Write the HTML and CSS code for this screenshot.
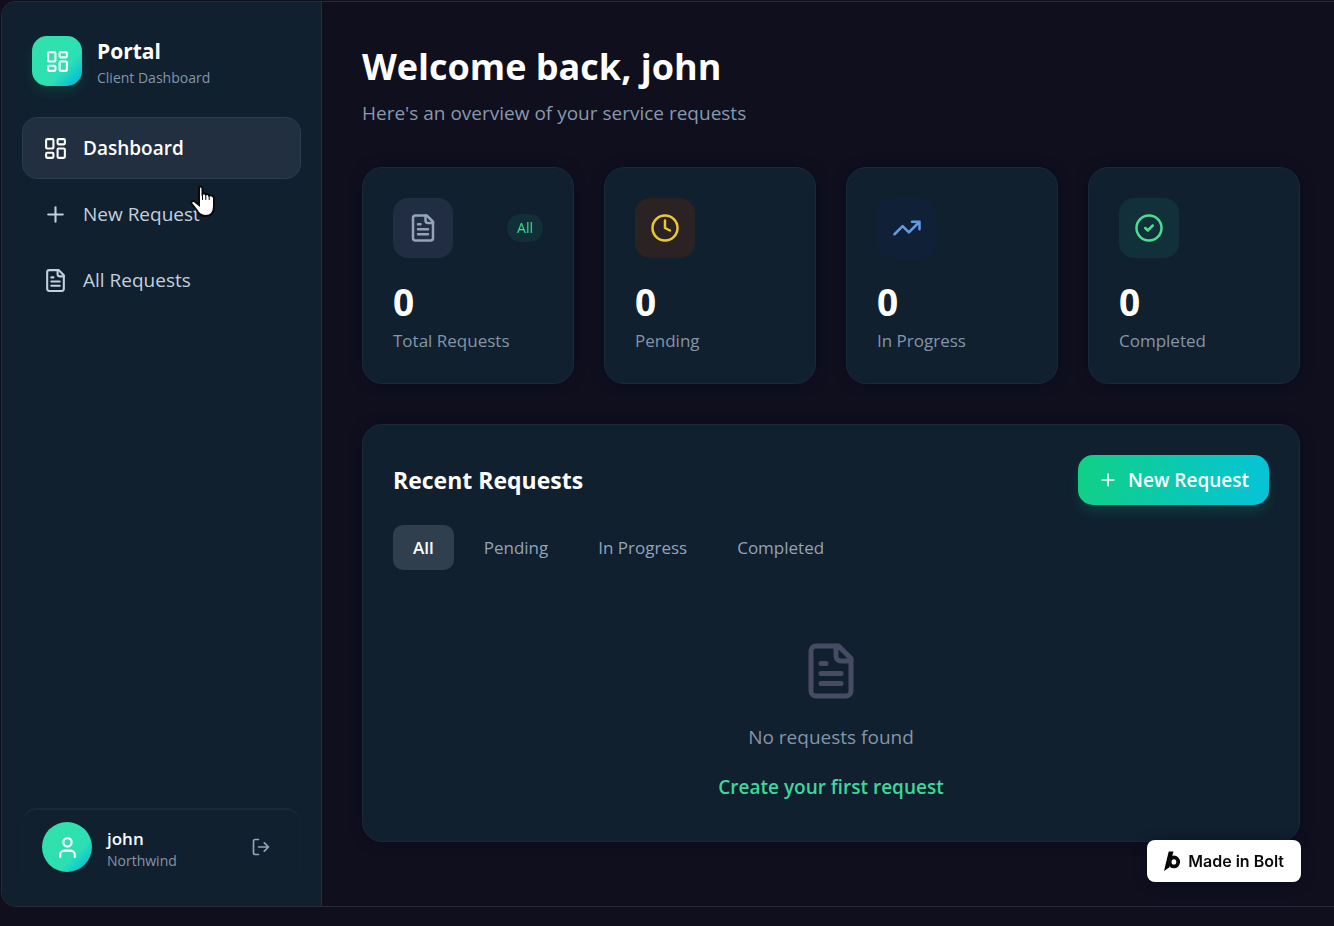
FILE: index.html
```html
<!DOCTYPE html>
<html lang="en">
<head>
    <meta charset="UTF-8">
    <meta name="viewport" content="width=device-width, initial-scale=1.0">
    <title>Portal - Client Dashboard</title>
    <link rel="stylesheet" href="styles.css">
</head>
<body>
    <!-- shared icons -->
    <svg class="sprite" aria-hidden="true">
        <symbol id="icon-dashboard" viewBox="0 0 24 24">
            <rect x="3" y="3" width="7" height="9" rx="1"/>
            <rect x="14" y="3" width="7" height="5" rx="1"/>
            <rect x="14" y="12" width="7" height="9" rx="1"/>
            <rect x="3" y="16" width="7" height="5" rx="1"/>
        </symbol>
        <symbol id="icon-plus" viewBox="0 0 24 24">
            <path d="M5 12h14M12 5v14"/>
        </symbol>
        <symbol id="icon-file" viewBox="0 0 24 24">
            <path d="M15 2H6a2 2 0 0 0-2 2v16a2 2 0 0 0 2 2h12a2 2 0 0 0 2-2V7Z"/>
            <path d="M14 2v4a2 2 0 0 0 2 2h4M10 9H8M16 13H8M16 17H8"/>
        </symbol>
    </svg>

    <div class="app">
        <aside class="sidebar">
            <div class="brand">
                <div class="brand-logo">
                    <svg class="icon"><use href="#icon-dashboard"/></svg>
                </div>
                <div class="brand-text">
                    <div class="brand-name">Portal</div>
                    <div class="brand-sub">Client Dashboard</div>
                </div>
            </div>

            <nav class="nav">
                <a href="#" class="nav-item active">
                    <svg class="icon"><use href="#icon-dashboard"/></svg>
                    Dashboard
                </a>
                <a href="#new" class="nav-item">
                    <svg class="icon"><use href="#icon-plus"/></svg>
                    New Request
                </a>
                <a href="#all" class="nav-item">
                    <svg class="icon"><use href="#icon-file"/></svg>
                    All Requests
                </a>
            </nav>

            <div class="user">
                <div class="avatar">
                    <svg class="icon" viewBox="0 0 24 24"><circle cx="12" cy="7" r="4"/><path d="M19 21v-2a4 4 0 0 0-4-4H9a4 4 0 0 0-4 4v2"/></svg>
                </div>
                <div class="user-info">
                    <div class="user-name">john</div>
                    <div class="user-company">Northwind</div>
                </div>
                <button type="button" class="logout" aria-label="Sign out">
                    <svg class="icon" viewBox="0 0 24 24"><path d="M9 21H5a2 2 0 0 1-2-2V5a2 2 0 0 1 2-2h4M16 17l5-5-5-5M21 12H9"/></svg>
                </button>
            </div>
        </aside>

        <main class="main">
            <h1>Welcome back, john</h1>
            <p class="subtitle">Here's an overview of your service requests</p>

            <div class="stats">
                <div class="card stat">
                    <div class="stat-top">
                        <div class="stat-icon total"><svg class="icon"><use href="#icon-file"/></svg></div>
                        <span class="badge">All</span>
                    </div>
                    <div class="stat-value">0</div>
                    <div class="stat-label">Total Requests</div>
                </div>
                <div class="card stat">
                    <div class="stat-top">
                        <div class="stat-icon pending"><svg class="icon" viewBox="0 0 24 24"><circle cx="12" cy="12" r="10"/><path d="M12 6v6l4 2"/></svg></div>
                    </div>
                    <div class="stat-value">0</div>
                    <div class="stat-label">Pending</div>
                </div>
                <div class="card stat">
                    <div class="stat-top">
                        <div class="stat-icon progress"><svg class="icon" viewBox="0 0 24 24"><path d="M22 7l-8.500 8.500-5-5L2 17M16 7h6v6"/></svg></div>
                    </div>
                    <div class="stat-value">0</div>
                    <div class="stat-label">In Progress</div>
                </div>
                <div class="card stat">
                    <div class="stat-top">
                        <div class="stat-icon completed"><svg class="icon" viewBox="0 0 24 24"><circle cx="12" cy="12" r="10"/><path d="M9 12l2 2 4-4"/></svg></div>
                    </div>
                    <div class="stat-value">0</div>
                    <div class="stat-label">Completed</div>
                </div>
            </div>

            <section class="card requests">
                <div class="requests-header">
                    <h2>Recent Requests</h2>
                    <button type="button" class="new-btn">
                        <svg class="icon"><use href="#icon-plus"/></svg>
                        New Request
                    </button>
                </div>
                <div class="tabs">
                    <button type="button" class="tab active">All</button>
                    <button type="button" class="tab">Pending</button>
                    <button type="button" class="tab">In Progress</button>
                    <button type="button" class="tab">Completed</button>
                </div>
                <div class="empty">
                    <svg class="icon"><use href="#icon-file"/></svg>
                    <p>No requests found</p>
                    <a href="#new">Create your first request</a>
                </div>
            </section>
        </main>
    </div>

    <a href="#bolt" class="bolt-badge">
        <svg viewBox="0 0 18 22"><path d="M5 1h5L5.500 18 0 21.500Z"/><ellipse cx="10.500" cy="12" rx="4.500" ry="4.800"/></svg>
        Made in Bolt
    </a>

    <svg class="pointer" viewBox="0 0 26 34" aria-hidden="true">
        <path d="M9 3.500Q9 1.500 10.500 1.500T12.500 3.500V9Q14.500 7.500 15.700 9.500Q18 8.300 19 10.500Q22.500 9.500 24 12.500V21Q24 31 15.500 31Q9.500 31 6.500 25L1.500 18.500Q1 15.500 4 16L9 20Z"/>
        <path class="pointer-lines" d="M12.500 9v6M15.800 10V15M19.200 11V15"/>
    </svg>
</body>
</html>
```

FILE: styles.css
```css
* {
    box-sizing: border-box;
}

body {
    margin: 0;
    padding: 1px 0 19px 1px;
    min-height: 100vh;
    display: flex;
    background-color: #100f1e;
    color: white;
    font-family: "Segoe UI", "Open Sans", "Noto Sans", sans-serif;
    font-size: 19px;
    line-height: 28px;
}

h1, h2, p {
    margin: 0;
}

a {
    text-decoration: none;
}

button {
    border: none;
    background: none;
    padding: 0;
    color: inherit;
    font: inherit;
    cursor: pointer;
}

.sprite {
    position: absolute;
    width: 0;
    height: 0;
}

.icon {
    width: 25px;
    height: 25px;
    flex-shrink: 0;
    fill: none;
    stroke: currentColor;
    stroke-width: 2;
    stroke-linecap: round;
    stroke-linejoin: round;
}

.app {
    flex: 1;
    display: flex;
    border: 1px solid #2b2a3b;
    border-right: none;
    border-radius: 15px 0 0 15px;
    overflow: hidden;
}

/* sidebar */
.sidebar {
    width: 320px;
    flex-shrink: 0;
    display: flex;
    flex-direction: column;
    padding: 30px 20px 22px;
    background-color: #10202f;
    border-right: 1px solid #1d3141;
}

.brand {
    display: flex;
    align-items: center;
    gap: 15px;
    padding: 0 10px;
    margin-bottom: 27px;
}

.brand-text {
    padding-top: 4px;
}

.brand-logo,
.avatar {
    width: 50px;
    height: 50px;
    display: flex;
    align-items: center;
    justify-content: center;
    background: linear-gradient(135deg, #34e0a8 0%, #2ce0b4 65%, #06bfd6 90%);
}

.brand-logo {
    border-radius: 15px;
    box-shadow: 0 6px 12px rgba(16, 185, 129, 0.15);
}

.brand-name {
    font-size: 21px;
    line-height: 30px;
    font-weight: 700;
}

.brand-sub,
.user-company {
    font-size: 14px;
    line-height: 24px;
    color: #8595a7;
}

.nav {
    display: flex;
    flex-direction: column;
    gap: 4px;
}

.nav-item {
    height: 62px;
    display: flex;
    align-items: center;
    gap: 15px;
    padding: 0 20px;
    border: 1px solid transparent;
    border-radius: 15px;
    color: #c3cfdd;
}

.nav-item.active {
    background-color: #212f40;
    border-color: #2c3d4d;
    color: white;
    font-weight: 600;
}

.user {
    display: flex;
    align-items: center;
    gap: 15px;
    margin-top: auto;
    padding: 12px 19px;
    border: 1px solid #13242f;
    border-top: 2px solid #182a38;
    border-bottom: none;
    border-radius: 15px;
}

.avatar {
    border-radius: 50%;
}

.user-info {
    flex: 1;
    padding-top: 6px;
}

.user-name {
    font-size: 17px;
    line-height: 22px;
    font-weight: 600;
}

.user-company {
    line-height: 22px;
}

.logout {
    display: flex;
    padding: 10px;
    color: #94a3b8;
}

.logout .icon {
    width: 20px;
    height: 20px;
}

/* main column */
.main {
    flex: 1;
    min-width: 0;
    padding: 40px 34px 40px 40px;
}

h1 {
    font-size: 36px;
    line-height: 50px;
    font-weight: 700;
}

.subtitle {
    margin-top: 7px;
    color: #8799ad;
}

.card {
    background-color: #10202f;
    border: 1px solid #182a3a;
    border-radius: 20px;
    box-shadow: 0 0 12px rgba(3, 12, 30, 0.6);
}

.stats {
    display: grid;
    grid-template-columns: repeat(4, 1fr);
    gap: 30px;
    margin: 40px 0;
}

.stat {
    padding: 30px;
}

.stat-top {
    display: flex;
    align-items: center;
    justify-content: space-between;
    margin-bottom: 20px;
}

.stat-icon {
    width: 60px;
    height: 60px;
    display: flex;
    align-items: center;
    justify-content: center;
    border-radius: 15px;
}

.stat-icon .icon {
    width: 30px;
    height: 30px;
}

.stat-icon.total {
    background-color: #202d43;
    color: #94a3b8;
}

.stat-icon.pending {
    background-color: #2b2223;
    color: #eac831;
}

.stat-icon.progress {
    background-color: #102036;
    color: #609ae8;
}

.stat-icon.completed {
    background-color: #12303a;
    color: #4ade92;
}

.badge {
    padding: 2px 10px;
    border-radius: 14px;
    background-color: #102f36;
    color: #3ddc8e;
    font-size: 14px;
    line-height: 24px;
}

.stat-value {
    margin-bottom: 3px;
    font-size: 37px;
    line-height: 48px;
    font-weight: 700;
}

.stat-label {
    font-size: 17px;
    line-height: 24px;
    color: #8595a7;
}

.requests {
    padding: 30px;
}

.requests-header {
    display: flex;
    align-items: center;
    justify-content: space-between;
    margin-bottom: 20px;
}

h2 {
    font-size: 23px;
    line-height: 30px;
    font-weight: 700;
}

.new-btn {
    height: 50px;
    display: flex;
    align-items: center;
    gap: 10px;
    padding: 0 20px;
    border-radius: 15px;
    background: linear-gradient(100deg, #10d084, #06c3da);
    box-shadow: 0 8px 12px rgba(16, 185, 129, 0.15);
    font-weight: 600;
}

.new-btn .icon {
    width: 20px;
    height: 20px;
}

.tabs {
    display: flex;
    gap: 10px;
}

.tab {
    height: 45px;
    padding: 0 20px;
    border-radius: 10px;
    color: #94a3b8;
    font-size: 17px;
    font-weight: 500;
}

.tab.active {
    background-color: #2f3f4e;
    color: white;
    font-weight: 600;
}

.empty {
    display: flex;
    flex-direction: column;
    align-items: center;
    padding: 71px 0 10px;
}

.empty .icon {
    width: 60px;
    height: 60px;
    color: #474b64;
}

.empty p {
    margin: 22px 0;
    color: #8595a7;
}

.empty a {
    color: #3ed79a;
    font-weight: 600;
}

/* floating badge */
.bolt-badge {
    position: fixed;
    right: 33px;
    bottom: 44px;
    height: 42px;
    display: flex;
    align-items: center;
    gap: 7px;
    padding: 0 17px;
    border-radius: 8px;
    background-color: white;
    box-shadow: 0 2px 12px rgba(0, 10, 30, 0.6);
    color: #0a0a0a;
    font-family: Inter, sans-serif;
    font-size: 16px;
    font-weight: 600;
}

.bolt-badge svg {
    width: 17px;
    height: 22px;
}

.bolt-badge ellipse {
    fill: none;
    stroke: currentColor;
    stroke-width: 4;
}

.pointer {
    position: absolute;
    left: 190px;
    top: 185px;
    width: 26px;
    height: 34px;
    fill: white;
    stroke: #0a0a0a;
    stroke-width: 2;
}

.pointer-lines {
    stroke-width: 1;
}
```
